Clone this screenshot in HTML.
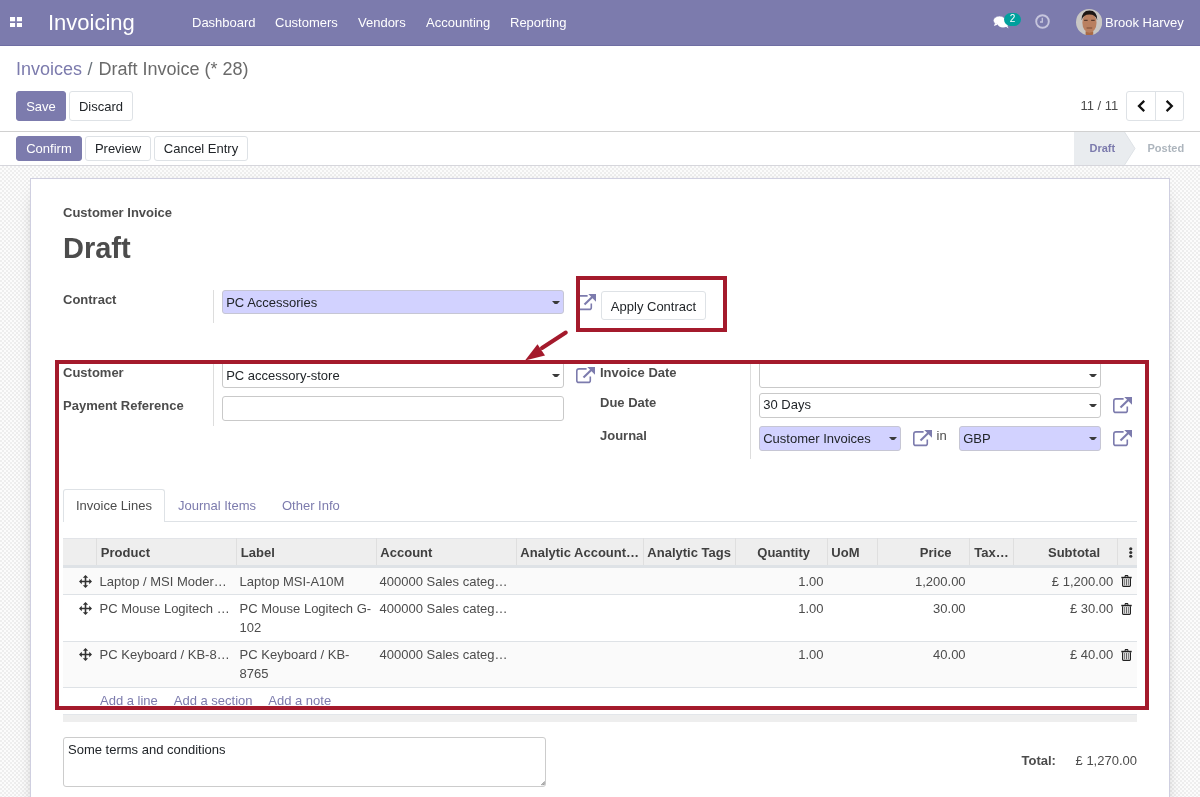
<!DOCTYPE html>
<html><head><meta charset="utf-8">
<style>
*{box-sizing:border-box;margin:0;padding:0}
html,body{width:1200px;height:797px;overflow:hidden;background:#fff}
body{font-family:"Liberation Sans",sans-serif;font-size:13px;color:#4c4c4c;position:relative}
.a{position:absolute}
.t{position:absolute;line-height:1;white-space:nowrap}
.nav{left:0;top:0;width:1200px;height:46px;background:#7c7bad;border-bottom:1px solid #6f6ea3}
.nav .t{color:#fff}
.btn{position:absolute;border-radius:3px;font-size:13px;line-height:1;text-align:center}
.bp{background:#7c7bad;color:#fff;border:1px solid #7c7bad}
.bs{background:#fff;color:#212529;border:1px solid #dee2e6}
.bg{left:0;top:166px;width:1200px;height:631px;background:repeating-conic-gradient(#eeeeee 0 25%,#fcfcfc 0 50%) 0 0/4px 4px}
.sheet{left:30px;top:178px;width:1140px;height:640px;background:#fff;border:1px solid #cfcfe0;box-shadow:0 5px 20px -15px #000}
.lbl{font-weight:bold;color:#4c4c4c}
.inp{position:absolute;height:24.4px;border:1px solid #c9c9c9;border-radius:3px;background:#fff}
.req{background:#d2d2ff;border-color:#c6c6d4}
.inp .v{position:absolute;left:3.2px;top:4.6px;line-height:1;color:#212529;white-space:nowrap}
.caret{position:absolute;right:2.8px;top:10px}
.vl{position:absolute;width:1px;background:#ddd}
.red{position:absolute;border:4px solid #a41a2c}
</style></head><body>
<div id="root" style="position:absolute;left:0;top:0;width:1200px;height:797px;overflow:hidden;background:#fff;will-change:transform">

<!-- NAVBAR -->
<div class="a nav">
  <svg class="a" style="left:10px;top:16.8px" width="12.2" height="10.4" viewBox="0 0 12.2 10.4"><rect x="0" y="0" width="5.1" height="4.3" fill="#fff"/><rect x="6.9" y="0" width="5.3" height="4.3" fill="#fff"/><rect x="0" y="6" width="5.1" height="4.4" fill="#fff"/><rect x="6.9" y="6" width="5.3" height="4.4" fill="#fff"/></svg>
  <div class="t" style="left:48px;top:12.4px;font-size:22px">Invoicing</div>
  <div class="t" style="left:192px;top:16px">Dashboard</div>
  <div class="t" style="left:275px;top:16px">Customers</div>
  <div class="t" style="left:358px;top:16px">Vendors</div>
  <div class="t" style="left:426px;top:16px">Accounting</div>
  <div class="t" style="left:510px;top:16px">Reporting</div>
  <!-- chat -->
  <svg class="a" style="left:993px;top:15px" width="16" height="14" viewBox="0 0 16 14">
    <ellipse cx="6.5" cy="5.5" rx="6.2" ry="4.4" fill="#fff" stroke="#7c7bad" stroke-width="0.6"/>
    <path d="M2 8 L1 11 L5 9.5Z" fill="#fff"/>
    <ellipse cx="10" cy="9" rx="5.2" ry="3.6" fill="#fff"/>
    <path d="M12 11 L15.5 13.5 L14 10Z" fill="#fff"/>
  </svg>
  <div class="a" style="left:1004px;top:13px;width:17px;height:13px;border-radius:7px;background:#00a09d"></div>
  <div class="t" style="left:1009.8px;top:14.1px;font-size:10px">2</div>
  <!-- clock -->
  <svg class="a" style="left:1035px;top:14px" width="15" height="15" viewBox="0 0 15 15">
    <circle cx="7.5" cy="7.5" r="6.3" fill="none" stroke="#c6c5dd" stroke-width="1.9"/>
    <path d="M7.3 3.8 V8 H5" fill="none" stroke="#c6c5dd" stroke-width="1.3"/>
  </svg>
  <!-- avatar -->
  <svg class="a" style="left:1076px;top:8.7px" width="26.3" height="26.3" viewBox="0 0 26 26">
    <defs><clipPath id="av"><circle cx="13" cy="13" r="13"/></clipPath></defs>
    <g clip-path="url(#av)">
      <rect width="26" height="26" fill="#c9c7c4"/>
      <path d="M9.5 22 H17 V27 H9.5Z" fill="#a86a46"/>
      <ellipse cx="13.3" cy="13.5" rx="7" ry="10" fill="#b98060"/>
      <path d="M5.5 11 Q5.5 1.5 13.3 1.5 Q21 1.5 21 11 Q19.5 5.5 13.3 5.5 Q7 5.5 5.5 11Z" fill="#1c1714"/>
      <path d="M8 11.3 H11.5 M15 11.3 H18.5" stroke="#5a3b2c" stroke-width="1.2"/>
      <path d="M10.5 18.8 H16" stroke="#7a4a35" stroke-width="1"/>
    </g>
  </svg>
  <div class="t" style="left:1105px;top:16px">Brook Harvey</div>
</div>

<!-- CONTROL PANEL -->
<div class="t" style="left:16px;top:60px;font-size:18px;color:#7c7bad">Invoices</div>
<div class="t" style="left:87.5px;top:60px;font-size:18px;color:#6c757d">/</div>
<div class="t" style="left:98.5px;top:60px;font-size:18px;color:#6a6a6a">Draft Invoice (* 28)</div>
<div class="btn bp" style="left:16px;top:91px;width:50px;height:30px;padding-top:8px">Save</div>
<div class="btn bs" style="left:69px;top:91px;width:64px;height:30px;padding-top:8px">Discard</div>
<div class="t" style="left:1080.5px;top:99px;color:#4c4c4c">11 / 11</div>
<div class="btn bs" style="left:1126px;top:91px;width:58px;height:30px"></div>
<div class="a" style="left:1155px;top:92px;width:1px;height:28px;background:#dee2e6"></div>
<svg class="a" style="left:1137px;top:100px" width="9" height="12" viewBox="0 0 9 12"><path d="M7.2 0.9 L2 6 L7.2 11.1" fill="none" stroke="#111" stroke-width="2.3"/></svg>
<svg class="a" style="left:1165px;top:100px" width="9" height="12" viewBox="0 0 9 12"><path d="M1.6 0.9 L6.8 6 L1.6 11.1" fill="none" stroke="#111" stroke-width="2.3"/></svg>
<div class="a" style="left:0;top:131px;width:1200px;height:1px;background:#d0d0d0"></div>

<!-- STATUS BAR -->
<div class="btn bp" style="left:16px;top:136px;width:66px;height:25px;padding-top:5px">Confirm</div>
<div class="btn bs" style="left:85px;top:136px;width:66px;height:25px;padding-top:5px">Preview</div>
<div class="btn bs" style="left:154px;top:136px;width:94px;height:25px;padding-top:5px">Cancel Entry</div>
<svg class="a" style="left:1074px;top:132px" width="126" height="33" viewBox="0 0 126 33">
  <path d="M0 0 H50.5 L61 16.5 L50.5 33 H0Z" fill="#e9ecef"/>
  <path d="M50.5 0 L61 16.5 L50.5 33" fill="none" stroke="#dee2e6" stroke-width="1"/>
</svg>
<div class="t" style="left:1089.5px;top:142.7px;font-size:11px;font-weight:bold;color:#7c7bad">Draft</div>
<div class="t" style="left:1147.5px;top:142.7px;font-size:11px;font-weight:bold;color:#adb5bd">Posted</div>
<div class="a" style="left:0;top:165px;width:1200px;height:1px;background:#d6d6dc"></div>

<!-- SHEET BG -->
<div class="a bg"></div>
<div class="a sheet"></div>

<!-- SHEET CONTENT -->
<div class="t lbl" style="left:63px;top:206px">Customer Invoice</div>
<div class="t lbl" style="left:63px;top:233.5px;font-size:29px">Draft</div>

<div class="t lbl" style="left:63px;top:293px">Contract</div>
<div class="vl" style="left:213px;top:290px;height:33px"></div>
<div class="inp req" style="left:222px;top:290px;width:342px"><div class="v">PC Accessories</div><svg class="caret" width="8" height="3.4" viewBox="0 0 7.6 3.4" preserveAspectRatio="none"><path d="M0 0 H7.6 L4.6 3.4 H3Z" fill="#3a3a3a"/></svg></div>


<!-- Apply contract -->
<svg class="a" style="left:577px;top:293.8px" width="19" height="17" viewBox="0 0 19 17"><path d="M10.6 1.9 H3 Q0.8 1.9 0.8 4.1 V13.4 Q0.8 15.4 2.8 15.4 H12.3 Q14.3 15.4 14.3 13.4 V9.6" fill="none" stroke="#7c7bad" stroke-width="1.6"/><path d="M7.5 10.5 L15.5 2.8" stroke="#7c7bad" stroke-width="2.1"/><path d="M11.3 0 H19 V7.7Z" fill="#7c7bad"/></svg>
<div class="btn bs" style="left:601px;top:291.2px;width:105px;height:29.3px;padding-top:8px;color:#212529">Apply Contract</div>

<svg class="a" style="left:515px;top:325px" width="60" height="40" viewBox="0 0 60 40">
  <path d="M50.8 7.5 L27 23" stroke="#a41a2c" stroke-width="4" stroke-linecap="round"/>
  <path d="M10 35.4 L22.5 19.2 L30 30.4Z" fill="#a41a2c"/>
</svg>


<!-- table -->
<div class="a" style="left:63px;top:538px;width:1074px;height:27px;background:#eeeeee;border-top:1px solid #e2e4e8"></div>
<div class="a" style="left:63px;top:565px;width:1074px;height:2.5px;background:#dee2e6"></div>
<div class="a" style="left:96px;top:538px;width:1px;height:27px;background:#dfdfdf"></div>
<div class="a" style="left:236px;top:538px;width:1px;height:27px;background:#dfdfdf"></div>
<div class="a" style="left:376px;top:538px;width:1px;height:27px;background:#dfdfdf"></div>
<div class="a" style="left:516px;top:538px;width:1px;height:27px;background:#dfdfdf"></div>
<div class="a" style="left:643px;top:538px;width:1px;height:27px;background:#dfdfdf"></div>
<div class="a" style="left:735px;top:538px;width:1px;height:27px;background:#dfdfdf"></div>
<div class="a" style="left:827px;top:538px;width:1px;height:27px;background:#dfdfdf"></div>
<div class="a" style="left:877px;top:538px;width:1px;height:27px;background:#dfdfdf"></div>
<div class="a" style="left:969px;top:538px;width:1px;height:27px;background:#dfdfdf"></div>
<div class="a" style="left:1013px;top:538px;width:1px;height:27px;background:#dfdfdf"></div>
<div class="a" style="left:1117px;top:538px;width:1px;height:27px;background:#dfdfdf"></div>
<div class="t lbl" style="left:100.85px;top:546px;color:#404040">Product</div>
<div class="t lbl" style="left:240.85px;top:546px;color:#404040">Label</div>
<div class="t lbl" style="left:380.35px;top:546px;color:#404040">Account</div>
<div class="t lbl" style="left:520.35px;top:546px;color:#404040">Analytic Account…</div>
<div class="t lbl" style="left:647.35px;top:546px;color:#404040">Analytic Tags</div>
<div class="t lbl" style="right:390px;top:546px;color:#404040">Quantity</div>
<div class="t lbl" style="left:831.35px;top:546px;color:#404040">UoM</div>
<div class="t lbl" style="right:248.39999999999998px;top:546px;color:#404040">Price</div>
<div class="t lbl" style="left:974.35px;top:546px;color:#404040">Tax…</div>
<div class="t lbl" style="right:100px;top:546px;color:#404040">Subtotal</div>
<svg class="a" style="left:1129px;top:546.5px" width="3.5" height="11" viewBox="0 0 3.5 11"><circle cx="1.75" cy="1.75" r="1.6" fill="#333"/><circle cx="1.75" cy="5.5" r="1.6" fill="#333"/><circle cx="1.75" cy="9.25" r="1.6" fill="#333"/></svg>
<div class="a" style="left:63px;top:567.5px;width:1074px;height:26.5px;background:#fafafa"></div>
<div class="a" style="left:63px;top:594px;width:1074px;height:1px;background:#dee2e6"></div>
<div class="a" style="left:63px;top:595px;width:1074px;height:46px;background:#fff"></div>
<div class="a" style="left:63px;top:641px;width:1074px;height:1px;background:#dee2e6"></div>
<div class="a" style="left:63px;top:642px;width:1074px;height:45px;background:#fafafa"></div>
<div class="a" style="left:63px;top:687px;width:1074px;height:1px;background:#dee2e6"></div>
<svg class="a" style="left:79.4px;top:574.5px" width="13" height="13" viewBox="0 0 13 13"><path d="M6.5 1.5 V11.5 M1.5 6.5 H11.5" stroke="#333" stroke-width="1.6"/><path d="M6.5 0 L9.2 2.8 H3.8Z M6.5 13 L9.2 10.2 H3.8Z M0 6.5 L2.8 3.8 V9.2Z M13 6.5 L10.2 3.8 V9.2Z" fill="#333"/></svg>
<div class="t" style="left:99.6px;top:575px;color:#4c4c4c">Laptop / MSI Moder…</div>
<div class="t" style="left:239.6px;top:575px;color:#4c4c4c">Laptop MSI-A10M</div>
<div class="t" style="left:379.6px;top:575px;color:#4c4c4c">400000 Sales categ…</div>
<div class="t" style="right:376.5px;top:575px;color:#4c4c4c">1.00</div>
<div class="t" style="right:234.39999999999998px;top:575px;color:#4c4c4c">1,200.00</div>
<div class="t" style="right:86.70000000000005px;top:575px;color:#4c4c4c">£ 1,200.00</div>
<svg class="a" style="left:1121px;top:575.3px" width="11" height="12" viewBox="0 0 11 12"><path d="M3.8 1.8 L4.5 0.6 H6.5 L7.2 1.8" fill="none" stroke="#222" stroke-width="1.2"/><rect x="0.3" y="1.8" width="10.4" height="1.5" fill="#222"/><path d="M1.6 3.3 V10.6 Q1.6 11.4 2.4 11.4 H8.6 Q9.4 11.4 9.4 10.6 V3.3" fill="none" stroke="#222" stroke-width="1.2"/><path d="M3.7 4 V10.4 M5.5 4 V10.4 M7.3 4 V10.4" stroke="#555" stroke-width="0.9"/></svg>
<svg class="a" style="left:79.4px;top:601.8px" width="13" height="13" viewBox="0 0 13 13"><path d="M6.5 1.5 V11.5 M1.5 6.5 H11.5" stroke="#333" stroke-width="1.6"/><path d="M6.5 0 L9.2 2.8 H3.8Z M6.5 13 L9.2 10.2 H3.8Z M0 6.5 L2.8 3.8 V9.2Z M13 6.5 L10.2 3.8 V9.2Z" fill="#333"/></svg>
<div class="t" style="left:99.6px;top:602.3px;color:#4c4c4c">PC Mouse Logitech …</div>
<div class="t" style="left:239.6px;top:602.3px;color:#4c4c4c">PC Mouse Logitech G-</div>
<div class="t" style="left:379.6px;top:602.3px;color:#4c4c4c">400000 Sales categ…</div>
<div class="t" style="right:376.5px;top:602.3px;color:#4c4c4c">1.00</div>
<div class="t" style="right:234.39999999999998px;top:602.3px;color:#4c4c4c">30.00</div>
<div class="t" style="right:86.70000000000005px;top:602.3px;color:#4c4c4c">£ 30.00</div>
<svg class="a" style="left:1121px;top:602.5999999999999px" width="11" height="12" viewBox="0 0 11 12"><path d="M3.8 1.8 L4.5 0.6 H6.5 L7.2 1.8" fill="none" stroke="#222" stroke-width="1.2"/><rect x="0.3" y="1.8" width="10.4" height="1.5" fill="#222"/><path d="M1.6 3.3 V10.6 Q1.6 11.4 2.4 11.4 H8.6 Q9.4 11.4 9.4 10.6 V3.3" fill="none" stroke="#222" stroke-width="1.2"/><path d="M3.7 4 V10.4 M5.5 4 V10.4 M7.3 4 V10.4" stroke="#555" stroke-width="0.9"/></svg>
<div class="t" style="left:239.6px;top:621.3px;color:#4c4c4c">102</div>
<svg class="a" style="left:79.4px;top:647.8px" width="13" height="13" viewBox="0 0 13 13"><path d="M6.5 1.5 V11.5 M1.5 6.5 H11.5" stroke="#333" stroke-width="1.6"/><path d="M6.5 0 L9.2 2.8 H3.8Z M6.5 13 L9.2 10.2 H3.8Z M0 6.5 L2.8 3.8 V9.2Z M13 6.5 L10.2 3.8 V9.2Z" fill="#333"/></svg>
<div class="t" style="left:99.6px;top:648.3px;color:#4c4c4c">PC Keyboard / KB-8…</div>
<div class="t" style="left:239.6px;top:648.3px;color:#4c4c4c">PC Keyboard / KB-</div>
<div class="t" style="left:379.6px;top:648.3px;color:#4c4c4c">400000 Sales categ…</div>
<div class="t" style="right:376.5px;top:648.3px;color:#4c4c4c">1.00</div>
<div class="t" style="right:234.39999999999998px;top:648.3px;color:#4c4c4c">40.00</div>
<div class="t" style="right:86.70000000000005px;top:648.3px;color:#4c4c4c">£ 40.00</div>
<svg class="a" style="left:1121px;top:648.5999999999999px" width="11" height="12" viewBox="0 0 11 12"><path d="M3.8 1.8 L4.5 0.6 H6.5 L7.2 1.8" fill="none" stroke="#222" stroke-width="1.2"/><rect x="0.3" y="1.8" width="10.4" height="1.5" fill="#222"/><path d="M1.6 3.3 V10.6 Q1.6 11.4 2.4 11.4 H8.6 Q9.4 11.4 9.4 10.6 V3.3" fill="none" stroke="#222" stroke-width="1.2"/><path d="M3.7 4 V10.4 M5.5 4 V10.4 M7.3 4 V10.4" stroke="#555" stroke-width="0.9"/></svg>
<div class="t" style="left:239.6px;top:667.3px;color:#4c4c4c">8765</div>
<div class="t" style="left:100px;top:694px;color:#7c7bad">Add a line</div>
<div class="t" style="left:173.75px;top:694px;color:#7c7bad">Add a section</div>
<div class="t" style="left:268.25px;top:694px;color:#7c7bad">Add a note</div>
<div class="a" style="left:63px;top:714px;width:1074px;height:8px;background:#eeeeee;border-top:1px solid #e3e6ea"></div>
<div class="a" style="left:63px;top:737px;width:483px;height:50px;border:1px solid #ccc;border-radius:3px;background:#fff"></div>
<div class="t" style="left:68px;top:743.3px;color:#212529">Some terms and conditions</div>
<svg class="a" style="left:540.5px;top:781px" width="4.5" height="4.5" viewBox="0 0 4.5 4.5"><path d="M0.3 4.2 L4.2 0.3 M2.2 4.2 L4.2 2.2" stroke="#555" stroke-width="0.9"/></svg>
<div class="t lbl" style="left:1021.5px;top:753.8px">Total:</div>
<div class="t" style="right:63px;top:753.8px;color:#4c4c4c">£ 1,270.00</div>
<!-- big red box -->


<div class="t lbl" style="left:63px;top:366px">Customer</div>
<div class="t lbl" style="left:63px;top:399px">Payment Reference</div>
<div class="vl" style="left:213px;top:364px;height:62px"></div>
<div class="inp" style="left:222px;top:361px;width:342px;height:26.5px"><div class="v" style="top:7.1px">PC accessory-store</div><svg class="caret" style="top:11.5px" width="8" height="3.4" viewBox="0 0 7.6 3.4" preserveAspectRatio="none"><path d="M0 0 H7.6 L4.6 3.4 H3Z" fill="#3a3a3a"/></svg></div>
<div class="inp" style="left:222px;top:396.3px;width:342px"></div>
<svg class="a" style="left:576px;top:366.5px" width="19" height="17" viewBox="0 0 19 17"><path d="M10.6 1.9 H3 Q0.8 1.9 0.8 4.1 V13.4 Q0.8 15.4 2.8 15.4 H12.3 Q14.3 15.4 14.3 13.4 V9.6" fill="none" stroke="#7c7bad" stroke-width="1.6"/><path d="M7.5 10.5 L15.5 2.8" stroke="#7c7bad" stroke-width="2.1"/><path d="M11.3 0 H19 V7.7Z" fill="#7c7bad"/></svg>

<div class="t lbl" style="left:600px;top:366.4px">Invoice Date</div>
<div class="t lbl" style="left:600px;top:396.4px">Due Date</div>
<div class="t lbl" style="left:600px;top:429px">Journal</div>
<div class="vl" style="left:750px;top:364px;height:95px"></div>
<div class="inp" style="left:759px;top:361px;width:342px;height:26.5px"><svg class="caret" style="top:11.5px" width="8" height="3.4" viewBox="0 0 7.6 3.4" preserveAspectRatio="none"><path d="M0 0 H7.6 L4.6 3.4 H3Z" fill="#3a3a3a"/></svg></div>
<div class="inp" style="left:759px;top:392.8px;width:342px;height:24.9px"><div class="v">30 Days</div><svg class="caret" width="8" height="3.4" viewBox="0 0 7.6 3.4" preserveAspectRatio="none"><path d="M0 0 H7.6 L4.6 3.4 H3Z" fill="#3a3a3a"/></svg></div>
<svg class="a" style="left:1113px;top:396.5px" width="19" height="17" viewBox="0 0 19 17"><path d="M10.6 1.9 H3 Q0.8 1.9 0.8 4.1 V13.4 Q0.8 15.4 2.8 15.4 H12.3 Q14.3 15.4 14.3 13.4 V9.6" fill="none" stroke="#7c7bad" stroke-width="1.6"/><path d="M7.5 10.5 L15.5 2.8" stroke="#7c7bad" stroke-width="2.1"/><path d="M11.3 0 H19 V7.7Z" fill="#7c7bad"/></svg>
<div class="inp req" style="left:759px;top:426px;width:141.5px;height:24.6px"><div class="v">Customer Invoices</div><svg class="caret" width="8" height="3.4" viewBox="0 0 7.6 3.4" preserveAspectRatio="none"><path d="M0 0 H7.6 L4.6 3.4 H3Z" fill="#3a3a3a"/></svg></div>
<svg class="a" style="left:913px;top:429.6px" width="19" height="17" viewBox="0 0 19 17"><path d="M10.6 1.9 H3 Q0.8 1.9 0.8 4.1 V13.4 Q0.8 15.4 2.8 15.4 H12.3 Q14.3 15.4 14.3 13.4 V9.6" fill="none" stroke="#7c7bad" stroke-width="1.6"/><path d="M7.5 10.5 L15.5 2.8" stroke="#7c7bad" stroke-width="2.1"/><path d="M11.3 0 H19 V7.7Z" fill="#7c7bad"/></svg>
<div class="t" style="left:936.6px;top:429px;color:#4c4c4c">in</div>
<div class="inp req" style="left:959px;top:426px;width:142px;height:24.6px"><div class="v">GBP</div><svg class="caret" width="8" height="3.4" viewBox="0 0 7.6 3.4" preserveAspectRatio="none"><path d="M0 0 H7.6 L4.6 3.4 H3Z" fill="#3a3a3a"/></svg></div>
<svg class="a" style="left:1113px;top:429.8px" width="19" height="17" viewBox="0 0 19 17"><path d="M10.6 1.9 H3 Q0.8 1.9 0.8 4.1 V13.4 Q0.8 15.4 2.8 15.4 H12.3 Q14.3 15.4 14.3 13.4 V9.6" fill="none" stroke="#7c7bad" stroke-width="1.6"/><path d="M7.5 10.5 L15.5 2.8" stroke="#7c7bad" stroke-width="2.1"/><path d="M11.3 0 H19 V7.7Z" fill="#7c7bad"/></svg>

<!-- tabs -->
<div class="a" style="left:63px;top:521px;width:1074px;height:1px;background:#dee2e6"></div>
<div class="a" style="left:63px;top:489px;width:101.5px;height:33px;background:#fff;border:1px solid #dee2e6;border-bottom:none;border-radius:3px 3px 0 0"></div>
<div class="t" style="left:76px;top:498.7px;color:#4c4c4c">Invoice Lines</div>
<div class="t" style="left:178px;top:498.7px;color:#7c7bad">Journal Items</div>
<div class="t" style="left:282px;top:498.7px;color:#7c7bad">Other Info</div>

<div class="red" style="left:576px;top:276px;width:151px;height:55.5px"></div>
<div class="red" style="left:55px;top:360px;width:1094px;height:350px"></div>
</div>
</body></html>
